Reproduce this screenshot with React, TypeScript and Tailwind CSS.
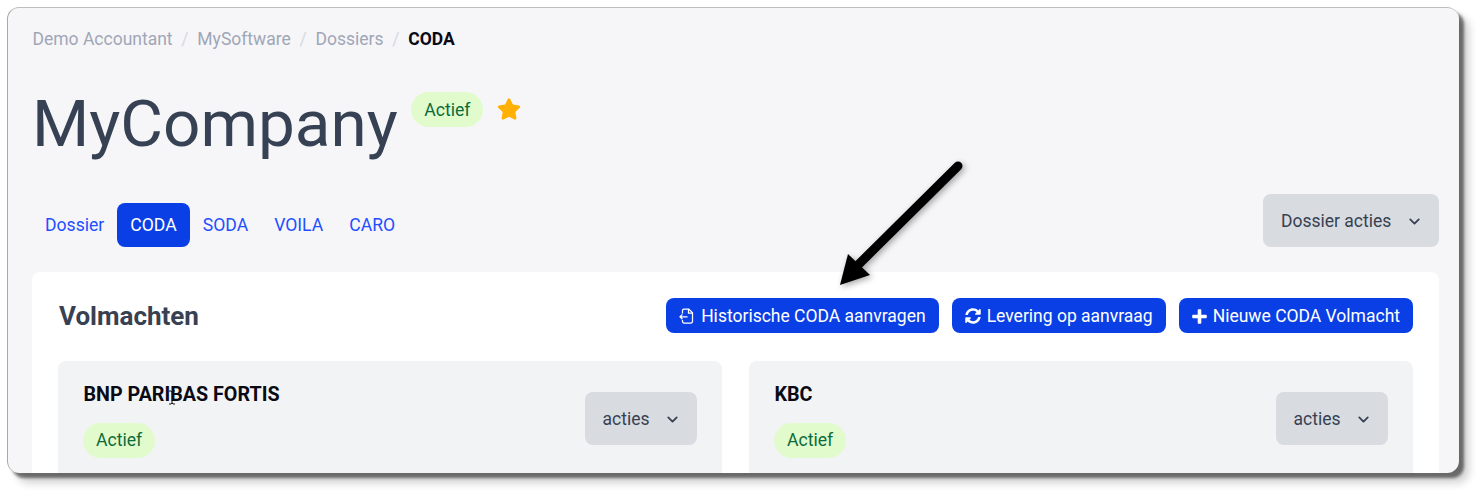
import { ChevronDown } from "lucide-react";
import { FaStar, FaSyncAlt } from "react-icons/fa";

function FileIn() {
  return (
    <svg width="15" height="16" viewBox="0 0 15 16" fill="none" stroke="currentColor" strokeWidth="1.25" className="shrink-0">
      <path d="M3.5 5.5V2.4C3.5 1.6 4.1 1 4.9 1H9.8l3.7 3.7v8.9c0 .8-.6 1.4-1.4 1.4H4.9c-.8 0-1.4-.6-1.4-1.4V12" />
      <path d="M9.5 1v4h4" />
      <path d="M8.5 8.8H1M3.4 6.4 1 8.8l2.4 2.4" />
    </svg>
  );
}

function Plus() {
  return (
    <svg width="15" height="15" viewBox="0 0 15 15" fill="currentColor" className="shrink-0">
      <path d="M5.7 1.2C5.7.6 6.2.2 6.7.2h1.6c.5 0 1 .4 1 1v4.5h4.5c.6 0 1 .5 1 1v1.6c0 .5-.4 1-1 1H9.3v4.5c0 .6-.5 1-1 1H6.7c-.5 0-1-.4-1-1V9.3H1.2c-.6 0-1-.5-1-1V6.7c0-.5.4-1 1-1h4.5z" />
    </svg>
  );
}

function Badge({ low }: { low?: boolean }) {
  return (
    <span className={`inline-flex h-[35px] items-center rounded-full bg-[#e2fbcd] px-[13px] text-[17.6px] text-[#0b6b3a] ${low ? "pl-[13.5px] pt-[2px]" : ""}`}>
      Actief
    </span>
  );
}

function Btn({ icon, label, wideGap }: { icon: React.ReactNode; label: string; wideGap?: boolean }) {
  return (
    <button className={`flex h-[35px] items-center rounded-lg bg-[#0b3fe6] px-[13px] pt-[1px] text-[17.5px] text-white ${wideGap ? "gap-[7px]" : "gap-[6px]"}`}>
      {icon}
      {label}
    </button>
  );
}

function Dropdown({ label, wide }: { label: string; wide?: boolean }) {
  return (
    <button className={`flex h-[53px] items-center justify-between rounded-lg bg-[#d8dbe0] pl-[18px] pr-[16px] pt-[2px] text-[17.5px] text-[#374151] ${wide ? "w-[176px]" : "w-[112.5px]"}`}>
      {label}
      <ChevronDown size={17} strokeWidth={2.5} />
    </button>
  );
}

function Tab({ label, active }: { label: string; active?: boolean }) {
  return (
    <a className={`flex h-[44px] items-center rounded-lg px-[13px] text-[17.6px] ${active ? "bg-[#0b3fe6] text-white" : "text-[#1f4fff]"}`}>
      {label}
    </a>
  );
}

function Sub({ title }: { title: string }) {
  return (
    <div className="flex h-[160px] flex-1 items-start justify-between rounded-lg bg-[#f2f3f5] pl-[25px] pr-[25px] pt-[22px]">
      <div className="flex flex-col items-start">
        <div className="pl-[0.5px] text-[19.7px] leading-[24px] font-bold text-[#0a0a14]">{title}</div>
        <div className="mt-[16px]"><Badge /></div>
      </div>
      <div className="mt-[9px]"><Dropdown label="acties" /></div>
    </div>
  );
}

export default function App() {
  return (
    <div className="h-[497px] w-[1483px] overflow-hidden bg-white pl-[7px] pt-[7px] font-['Roboto',sans-serif]">
      <div className="relative h-[466px] w-[1452px] overflow-hidden rounded-[12px] border-t border-l border-t-[#bdbdbd] border-l-[#a8a8a8] bg-[#f6f6f9] pl-[24px] pr-[20px] shadow-[5px_5px_3px_rgba(0,0,0,0.5),10px_10px_8px_rgba(0,0,0,0.18)]">
        <nav className="mt-[21px] flex h-[20px] items-center pl-[0.5px] text-[17.5px] text-[#a0a6b6]">
          <span>Demo Accountant</span>
          <span className="mx-[8.75px] text-[#d5d9e0]">/</span>
          <span>MySoftware</span>
          <span className="mx-[8.75px] text-[#d5d9e0]">/</span>
          <span>Dossiers</span>
          <span className="mx-[8.75px] text-[#d5d9e0]">/</span>
          <span className="font-bold text-[#0a0a14]">CODA</span>
        </nav>

        <div className="mt-[37px] flex items-start">
          <h1 className="text-[65.6px] leading-[75px] font-normal text-[#364154]">MyCompany</h1>
          <div className="ml-[13px] mt-[6px]"><Badge low /></div>
          <FaStar className="ml-[14px] mt-[11px] text-[#ffb000]" size={24} />
        </div>

        <div className="mt-[33px] flex items-start justify-between">
          <div className="mt-[9px] flex items-center">
            <Tab label="Dossier" />
            <Tab label="CODA" active />
            <Tab label="SODA" />
            <Tab label="VOILA" />
            <Tab label="CARO" />
          </div>
          <Dropdown label="Dossier acties" wide />
        </div>

        <section className="mt-[25px] rounded-lg bg-white px-[26px] pt-[26px]">
          <div className="flex h-[35px] items-start justify-between">
            <h2 className="ml-[1px] h-[35px] text-[26px] leading-[37px] font-bold text-[#374151]">Volmachten</h2>
            <div className="flex gap-[13px]">
              <Btn icon={<FileIn />} label="Historische CODA aanvragen" wideGap />
              <Btn icon={<FaSyncAlt size={16} />} label="Levering op aanvraag" />
              <Btn icon={<Plus />} label="Nieuwe CODA Volmacht" />
            </div>
          </div>
          <div className="mt-[28px] flex gap-[27px]">
            <Sub title="BNP PARIBAS FORTIS" />
            <Sub title="KBC" />
          </div>
        </section>

        <svg className="absolute left-[825px] top-[150px]" width="135" height="135" viewBox="0 0 135 135" style={{ filter: "drop-shadow(2px 2px 3px rgba(0,0,0,0.35))" }}>
          <path d="M125 8 25 107" stroke="#000" strokeWidth="9" strokeLinecap="round" fill="none" />
          <path d="M7 127 15 96 37 117Z" fill="#000" />
        </svg>

        <svg className="absolute left-[160px] top-[382px]" width="8" height="15" viewBox="0 0 8 15" fill="none" stroke="#111" strokeWidth="1">
          <path d="M1 1h2l1 1 1-1h2M4 2v11M1 14h2l1-1 1 1h2" />
        </svg>
      </div>
    </div>
  );
}
